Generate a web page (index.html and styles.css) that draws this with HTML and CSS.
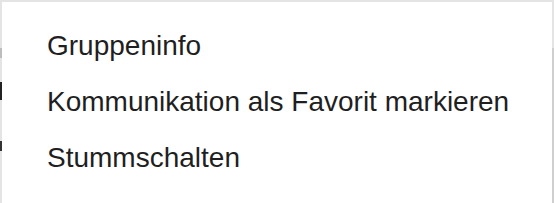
FILE: index.html
```html
<!DOCTYPE html>
<html lang="de">
<head>
    <meta charset="UTF-8">
    <title>Menü</title>
    <link rel="stylesheet" href="styles.css">
</head>
<body>
    <div class="backdrop">
        <span class="peek peek-line"></span>
        <span class="peek peek-l"></span>
        <span class="peek peek-o"></span>
        <span class="edge-right"></span>
    </div>
    <ul class="menu">
        <li class="menu-item">Gruppeninfo</li>
        <li class="menu-item">Kommunikation als Favorit markieren</li>
        <li class="menu-item">Stummschalten</li>
    </ul>
</body>
</html>
```

FILE: styles.css
```css
body {
    margin: 0;
    width: 554px;
    height: 203px;
    overflow: hidden;
    background-color: #e4e4e4;
    font-family: "Liberation Sans", Arial, sans-serif;
    position: relative;
}

.backdrop {
    position: absolute;
    left: 0;
    top: 0;
    width: 554px;
    height: 203px;
}

.peek {
    position: absolute;
    left: 0;
    width: 2px;
}

.peek-line {
    top: 48px;
    height: 10px;
    background-color: #bdbdbd;
}

.peek-l {
    top: 82px;
    height: 18px;
    background-color: #222;
}

.peek-o {
    top: 141px;
    height: 10px;
    background-color: #333;
}

.edge-right {
    position: absolute;
    right: 0;
    top: 48px;
    width: 2px;
    height: 155px;
    background-color: #cfcfcf;
}

.menu {
    position: absolute;
    left: 2px;
    top: 2px;
    width: 550px;
    height: 201px;
    margin: 0;
    padding: 16px 0 0;
    list-style: none;
    background-color: #ffffff;
    box-sizing: border-box;
    overflow: hidden;
}

.menu-item {
    padding: 0 45px;
    height: 56px;
    line-height: 56px;
    font-size: 28px;
    color: #1f1f1f;
    white-space: nowrap;
}
```
